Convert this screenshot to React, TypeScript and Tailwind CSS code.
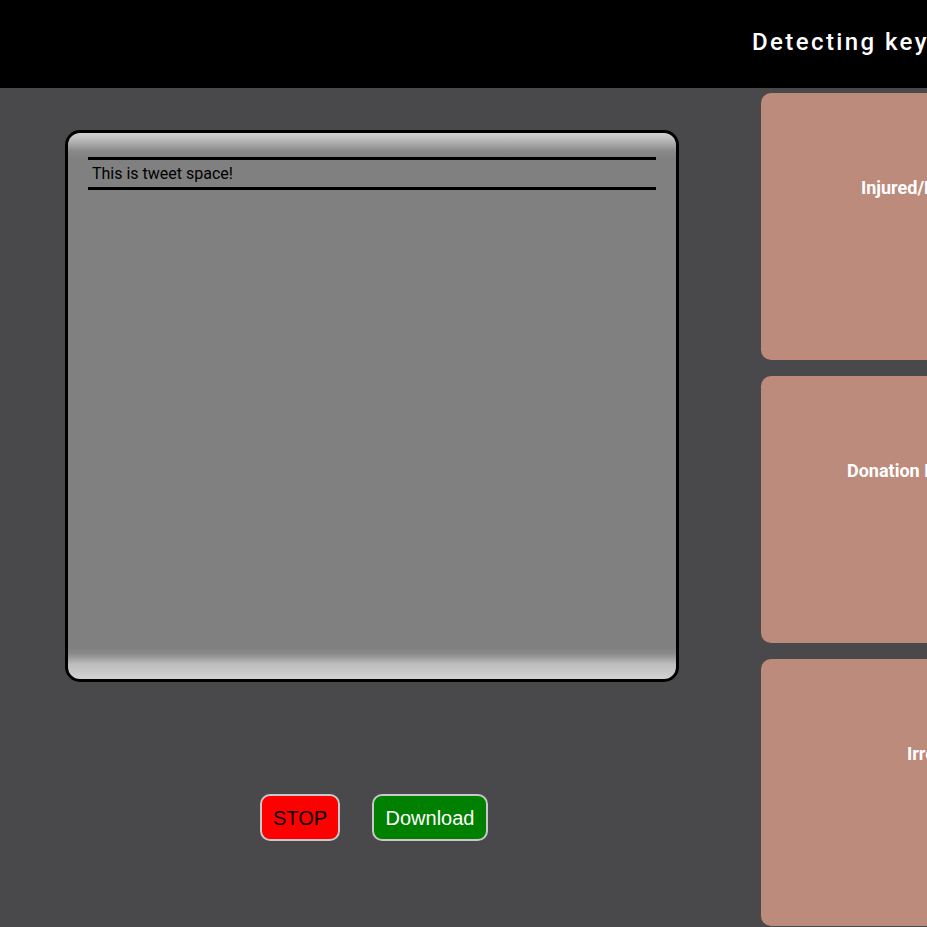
const cards = [
  { label: "Injured/Dead People", pad: "pl-[100px]" },
  { label: "Donation Requests", pad: "pl-[86px]" },
  { label: "Irrelevant Tweets", pad: "pl-[146px]" },
]

export default function App() {
  return (
    <div className="w-[927px] h-[927px] overflow-hidden bg-[#49484a] font-['Roboto',sans-serif]">
      <header className="h-[88px] bg-black flex items-center pl-[752px] whitespace-nowrap">
        <h1 className="text-[24px] font-medium tracking-[0.1em] text-white pb-[4px]">
          Detecting keywords from tweets
        </h1>
      </header>

      <div className="flex w-[1300px]">
        <div className="w-[761px] shrink-0 pl-[65px] pt-[42px]">
          <div className="w-[614px] h-[552px] rounded-[15px] border-[3px] border-black bg-[linear-gradient(to_bottom,#d2d2d2_0px,#bdbdbd_6px,#8a8a8a_18px,#808080_26px,#808080_515px,#8a8a8a_521px,#bdbdbd_531px,#d2d2d2_546px)] px-[20px] pt-[24px]">
            <div className="border-y-[3px] border-black h-[33px] flex items-center pl-[4px]">
              <p className="text-[16px] text-black">This is tweet space!</p>
            </div>
          </div>

          <div className="w-[614px] flex justify-center gap-[32px] mt-[112px] pl-[4px] font-['Liberation_Sans',Arial,sans-serif]">
            <button className="w-[80px] h-[47px] rounded-[10px] border-2 border-[#c8c8c8] bg-[#ff0000] text-[20px] text-black">
              STOP
            </button>
            <button className="w-[116px] h-[47px] rounded-[10px] border-2 border-[#c8c8c8] bg-[#008000] text-[20px] text-white">
              Download
            </button>
          </div>
        </div>

        <div className="flex flex-col gap-[16px] pt-[5px]">
          {cards.map((card) => (
            <div
              key={card.label}
              className={`w-[320px] h-[267px] rounded-[10px] bg-[#bd8b7c] pt-[81px] ${card.pad}`}
            >
              <p className="text-[18px] font-bold text-white whitespace-nowrap">{card.label}</p>
            </div>
          ))}
        </div>
      </div>
    </div>
  )
}
